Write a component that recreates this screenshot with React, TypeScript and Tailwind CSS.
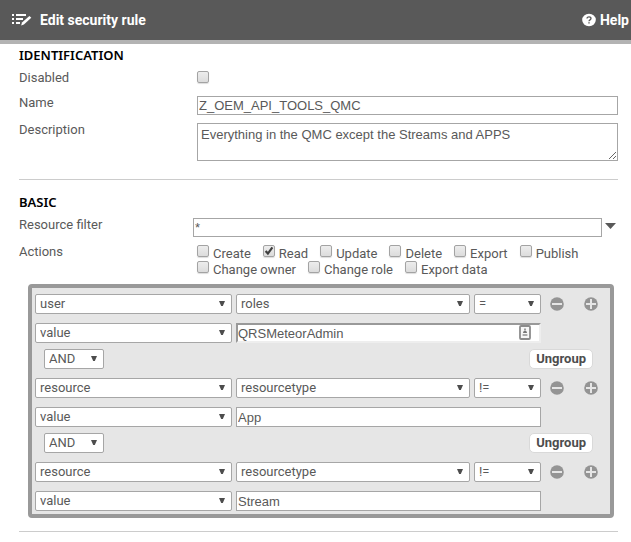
import { ReactNode } from 'react';

const labelText = "font-['Roboto',sans-serif] text-[13px] leading-4 text-[#595959]";
const fieldText = "font-['Liberation_Sans',sans-serif] text-[13px] leading-4 text-[#595959]";
const barText = "font-['Roboto',sans-serif] text-[14px] font-bold leading-4";
const headingText = "font-['Noto_Sans',sans-serif] text-[13px] font-semibold leading-4 text-black";

function EditIcon() {
  return (
    <svg width="20" height="12" viewBox="0 0 20 12" fill="none" aria-hidden="true">
      <path d="M0 1h2M0 5h2M0 9h2" stroke="#fff" strokeWidth="2" />
      <path d="M4 1h10M4 5h7M4 9h4" stroke="#fff" strokeWidth="2" />
      <path d="M9.2 11.4l.8-2.8L17.4 2l1.9 1.8-7.4 6.8z" fill="#fff" />
    </svg>
  );
}

function HelpIcon() {
  return (
    <svg width="14" height="14" viewBox="0 0 14 14" fill="none" aria-hidden="true">
      <ellipse cx="7" cy="7" rx="6.8" ry="6.2" fill="#fff" />
      <path d="M5 5.6c0-2.2 4-2.2 4 0 0 1.3-2 1.3-2 2.7" stroke="#595959" strokeWidth="1.3" />
      <path d="M6.3 9.2h1.4v1.3H6.3z" fill="#595959" />
    </svg>
  );
}

function RoundIcon({ plus }: { plus?: boolean }) {
  return (
    <svg width="14" height="14" viewBox="0 0 14 14" aria-hidden="true">
      <circle cx="7" cy="7" r="6.8" fill="#949494" />
      <path d={plus ? 'M2 7h10M7 2v10' : 'M2 7h10'} stroke="#e6e6e6" strokeWidth="2" />
    </svg>
  );
}

function Select({ label, value, options = [] }: { label: string; value: string; options?: string[] }) {
  return (
    <div className="relative">
      <select
        aria-label={label}
        defaultValue={value}
        className={`${labelText} block h-5 w-full appearance-none rounded-[2px] border border-[#a6a6a6] bg-white pl-1 pr-4`}
      >
        {[value, ...options].map((o) => (
          <option key={o}>{o}</option>
        ))}
      </select>
      <svg className="pointer-events-none absolute right-[7px] top-[7px]" width="6" height="5" viewBox="0 0 6 5" aria-hidden="true">
        <path d="M0 0h6L3.8 5H2.2z" fill="#4d4d4d" />
      </svg>
    </div>
  );
}

function Check({ id, label, checked }: { id: string; label?: string; checked?: boolean }) {
  return (
    <span className="flex h-4 gap-1">
      <span className="relative block h-3 w-3">
        <input
          id={id}
          type="checkbox"
          defaultChecked={checked}
          className="peer block h-3 w-3 appearance-none rounded-[2px] border border-[#a3a3a3] bg-gradient-to-b from-[#ededed] to-[#dcdcdc] shadow-[0_1px_1px_#dddddd]"
        />
        <svg className="pointer-events-none absolute left-0 top-0 hidden peer-checked:block" width="12" height="12" viewBox="0 0 12 12" fill="none" aria-hidden="true">
          <path d="M2.6 6l2.3 2.6L9.4 2.4" stroke="#404040" strokeWidth="2.2" />
        </svg>
      </span>
      {label && (
        <label htmlFor={id} className={`${labelText} pt-px`}>
          {label}
        </label>
      )}
    </span>
  );
}

function Row({ id, label, children }: { id?: string; label: string; children: ReactNode }) {
  return (
    <div className="flex items-start">
      {id ? (
        <label htmlFor={id} className={`${labelText} w-[174px] shrink-0`}>
          {label}
        </label>
      ) : (
        <span className={`${labelText} w-[174px] shrink-0`}>{label}</span>
      )}
      <div className="min-w-0 flex-1">{children}</div>
    </div>
  );
}

function Condition({ subject, property, operator, value, focused }: {
  subject: string;
  property: string;
  operator: string;
  value: string;
  focused?: boolean;
}) {
  return (
    <div className="grid grid-cols-[197fr_234fr_67fr_65px] gap-x-1 gap-y-[9px]">
      <Select label="Subject" value={subject} />
      <Select label="Property" value={property} />
      <Select label="Operator" value={operator} options={['like']} />
      <div className="flex items-center gap-5 pl-[5px]">
        <button type="button" aria-label="Remove condition"><RoundIcon /></button>
        <button type="button" aria-label="Add condition"><RoundIcon plus /></button>
      </div>
      <Select label="Value type" value="value" />
      <div className="relative col-span-2">
        <input
          aria-label="Value"
          defaultValue={value}
          className={`${fieldText} block h-5 w-full bg-white outline-none ${
            focused
              ? 'border-2 border-b-[#eeeeee] border-l-[#999999] border-r-[#eeeeee] border-t-[#999999]'
              : 'border border-[#a6a6a6] px-px'
          }`}
        />
        {focused && (
          <svg className="absolute right-[10px] top-[2px]" width="12" height="15" viewBox="0 0 12 15" fill="none" aria-hidden="true">
            <rect x="1" y="1" width="10" height="13" rx="1" fill="#f7f7f7" stroke="#8c8c8c" strokeWidth="1.8" />
            <path d="M6 3.4v2.2" stroke="#777" strokeWidth="1.4" />
            <path d="M4 8c0-3 4-3 4 0z" fill="#777" />
            <path d="M3.6 9h4.8v2H3.6z" fill="#aaa" />
          </svg>
        )}
      </div>
    </div>
  );
}

function Joiner() {
  return (
    <div className="my-[6px] flex h-[23px] items-start justify-between pl-[9px] pr-[17px]">
      <div className="w-[60px]">
        <Select label="Logical operator" value="AND" options={['OR']} />
      </div>
      <button
        type="button"
        className="h-5 rounded-[5px] border border-[#d9d9d9] bg-white px-[6px] font-['Roboto',sans-serif] text-[13px] font-bold leading-4 text-[#4d4d4d]"
      >
        Ungroup
      </button>
    </div>
  );
}

export default function App() {
  return (
    <div className="bg-white">
      <header className="flex h-11 items-center justify-between border-b-4 border-[#b3b3b3] bg-[#595959] pl-3 pr-[2px] text-white">
        <h1 className={`${barText} flex items-center gap-2`}>
          <EditIcon />
          Edit security rule
        </h1>
        <a href="#help" className={`${barText} flex items-center gap-1`}>
          <HelpIcon />
          Help
        </a>
      </header>

      <main className="pb-[10px] pl-[19px] pr-[13px] pt-[3px]">
        <section className="border-b border-[#cccccc] pb-[18px]">
          <h2 className={headingText}>IDENTIFICATION</h2>
          <div className="mt-[7px] flex flex-col">
            <Row id="disabled" label="Disabled">
              <div className="pl-1 pt-px"><Check id="disabled" /></div>
            </Row>
            <div className="mt-2">
              <Row id="name" label="Name">
                <div className="pl-1 pt-px">
                  <input id="name" defaultValue="Z_OEM_API_TOOLS_QMC" className={`${fieldText} block h-[19px] w-full border border-[#a6a6a6] bg-white px-px`} />
                </div>
              </Row>
            </div>
            <div className="mt-[7px]">
              <Row id="description" label="Description">
                <div className="pl-1 pt-px">
                  <textarea id="description" defaultValue="Everything in the QMC except the Streams and APPS" className={`${fieldText} block h-[38px] w-full border border-[#a6a6a6] bg-white px-[3px] py-[3px]`} />
                </div>
              </Row>
            </div>
          </div>
        </section>

        <section className="border-b border-[#cccccc] pb-[13px] pt-[14px]">
          <h2 className={headingText}>BASIC</h2>
          <div className="mt-[7px]">
            <Row id="filter" label="Resource filter">
              <div className="flex items-start gap-[3px] pr-[2px] pt-px">
                <input id="filter" defaultValue="*" className={`${fieldText} block h-[19px] min-w-0 flex-1 border border-[#a6a6a6] bg-white px-px`} />
                <button type="button" aria-label="Choose resource" className="pt-[5px]">
                  <svg width="11" height="6" viewBox="0 0 11 6" aria-hidden="true">
                    <path d="M0 0h11L5.5 6z" fill="#595959" />
                  </svg>
                </button>
              </div>
            </Row>
          </div>
          <div className="mt-[7px]">
            <Row label="Actions">
              <div className="flex flex-wrap gap-x-3 pl-1 pt-px">
                <Check id="create" label="Create" />
                <Check id="read" label="Read" checked />
                <Check id="update" label="Update" />
                <Check id="delete" label="Delete" />
                <Check id="export" label="Export" />
                <Check id="publish" label="Publish" />
                <Check id="owner" label="Change owner" />
                <Check id="role" label="Change role" />
                <Check id="data" label="Export data" />
              </div>
            </Row>
          </div>
          <div className="ml-[9px] mr-1 mt-[7px] rounded-[4px] border-4 border-[#999999] bg-[#e6e6e6] pb-[3px] pl-[3px] pt-[6px]">
            <Condition subject="user" property="roles" operator="=" value="QRSMeteorAdmin" focused />
            <Joiner />
            <Condition subject="resource" property="resourcetype" operator="!=" value="App" />
            <Joiner />
            <Condition subject="resource" property="resourcetype" operator="!=" value="Stream" />
          </div>
        </section>
      </main>
    </div>
  );
}
